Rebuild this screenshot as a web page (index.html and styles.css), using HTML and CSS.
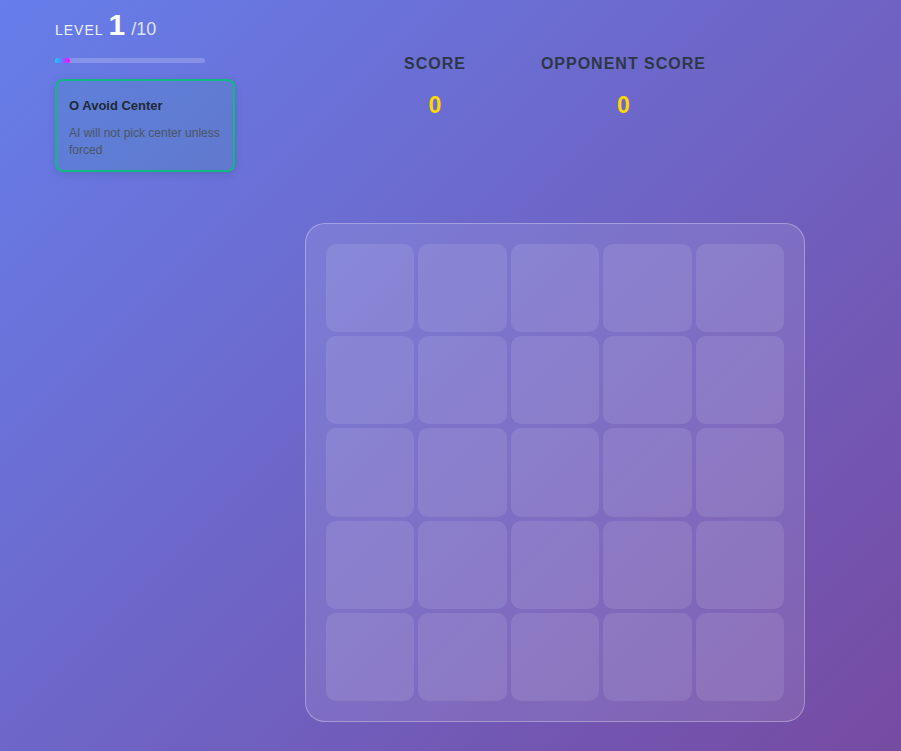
FILE: index.html
```html
<!DOCTYPE html>
<html>
<head>
<meta charset="utf-8">
<link rel="stylesheet" href="styles.css">
</head>
<body>
<div class="app">
  <aside class="sidebar">
    <div class="level">
      <span class="level-label">LEVEL</span>
      <span class="level-num">1</span>
      <span class="level-total">/10</span>
    </div>
    <div class="progress"><div class="progress-fill" style="width:10%"></div></div>
    <div class="rule-card">
      <div class="rule-title">O Avoid Center</div>
      <div class="rule-desc">AI will not pick center unless forced</div>
    </div>
  </aside>
  <main class="main">
    <div class="scores">
      <div class="score-item">
        <div class="score-label">SCORE</div>
        <div class="score-value">0</div>
      </div>
      <div class="score-item">
        <div class="score-label">OPPONENT SCORE</div>
        <div class="score-value">0</div>
      </div>
    </div>
    <div class="board">
      <div class="cell"></div><div class="cell"></div><div class="cell"></div><div class="cell"></div><div class="cell"></div>
      <div class="cell"></div><div class="cell"></div><div class="cell"></div><div class="cell"></div><div class="cell"></div>
      <div class="cell"></div><div class="cell"></div><div class="cell"></div><div class="cell"></div><div class="cell"></div>
      <div class="cell"></div><div class="cell"></div><div class="cell"></div><div class="cell"></div><div class="cell"></div>
      <div class="cell"></div><div class="cell"></div><div class="cell"></div><div class="cell"></div><div class="cell"></div>
    </div>
  </main>
</div>
</body>
</html>
```

FILE: styles.css
```css
* { box-sizing: border-box; }
html, body { margin: 0; height: 100%; }
body {
  width: 901px;
  height: 751px;
  overflow: hidden;
  font-family: "Liberation Sans", Arial, sans-serif;
  background: linear-gradient(135deg, #667eea 0%, #764ba2 100%);
}
.app {
  display: flex;
  padding: 8px 0 0 55px;
}
.sidebar {
  width: 180px;
  flex: none;
}
.level {
  display: flex;
  align-items: baseline;
  color: #fff;
  height: 32px;
}
.level-label {
  font-size: 14px;
  letter-spacing: 1px;
  color: rgba(255,255,255,0.9);
}
.level-num {
  font-size: 30px;
  font-weight: bold;
  margin-left: 5px;
}
.level-total {
  font-size: 18px;
  margin-left: 6px;
  color: rgba(255,255,255,0.8);
}
.progress {
  margin-top: 18px;
  width: 150px;
  height: 5px;
  border-radius: 3px;
  background: rgba(255,255,255,0.2);
}
.progress-fill {
  height: 100%;
  border-radius: 3px;
  background: linear-gradient(90deg, #00d4ff, #ff00ff);
}
.rule-card {
  margin-top: 16px;
  width: 180px;
  border: 2px solid #10b981;
  border-radius: 8px;
  background: rgba(16,185,129,0.1);
  box-shadow: 0 2px 8px rgba(0,0,0,0.12);
  padding: 17px 12px 11px;
}
.rule-title {
  font-size: 13px;
  font-weight: bold;
  color: #1f2937;
  line-height: 16px;
}
.rule-desc {
  margin-top: 11px;
  font-size: 12px;
  line-height: 17px;
  color: #4b5563;
}
.main {
  margin-left: 70px;
  width: 500px;
  display: flex;
  flex-direction: column;
  align-items: center;
}
.scores {
  display: flex;
  gap: 35px;
  margin-top: 47px;
}
.score-item {
  padding: 0 20px;
  text-align: center;
}
.score-label {
  font-size: 16px;
  font-weight: bold;
  letter-spacing: 1px;
  color: #2d3748;
  line-height: 18px;
}
.score-value {
  margin-top: 19px;
  font-size: 23px;
  font-weight: bold;
  color: #ffd700;
  line-height: 26px;
}
.board {
  margin-top: 105px;
  width: 500px;
  height: 499px;
  padding: 20px;
  border: 1px solid rgba(255,255,255,0.3);
  border-radius: 20px;
  background: rgba(255,255,255,0.1);
  display: grid;
  grid-template-columns: repeat(5, 1fr);
  grid-template-rows: repeat(5, 1fr);
  gap: 4px;
}
.cell {
  border-radius: 10px;
  background: rgba(255,255,255,0.1);
}
```
